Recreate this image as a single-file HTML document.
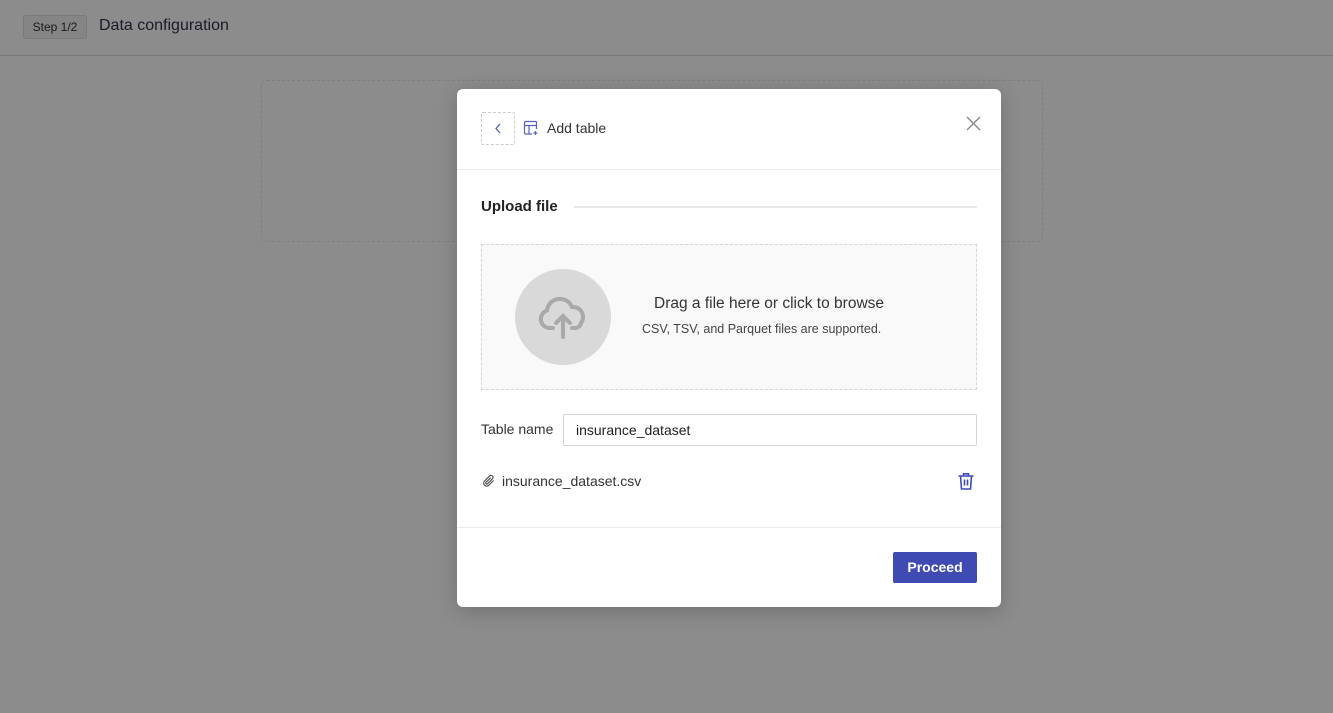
<!DOCTYPE html>
<html><head><style>
body{margin:0;width:1333px;height:713px;background:#8c8c8c;font-family:"Liberation Sans",sans-serif;position:relative;overflow:hidden}
.step{position:absolute;left:23px;top:15px;width:62px;height:22px;border:1px solid #7a7a7a;border-radius:3px;background:#858585;font-size:12px;color:#1a1a1a;text-align:center;line-height:22px}
.title{position:absolute;left:99px;top:17px;font-size:16px;color:#1c1a2a}
.hr{position:absolute;left:0;right:0;top:55px;border-top:1px solid #777}
.bgbox{position:absolute;left:261px;top:80px;width:780px;height:160px;border:1px dashed #7f7f7f;border-radius:6px}
.modal{position:absolute;left:457px;top:89px;width:544px;height:518px;background:#fff;border-radius:6px;box-shadow:0 4px 20px rgba(0,0,0,.2)}
.back{position:absolute;left:24px;top:23px;width:32px;height:31px;border:1px dashed #ccc;border-radius:2px}
.sep{position:absolute;left:0;right:0;border-top:1px solid #ebebeb}
.drop{position:absolute;left:24px;top:155px;width:494px;height:144px;border:1px dashed #d5d5d5;background:#f9f9f9}
.circ{position:absolute;left:33px;top:24px;width:96px;height:96px;border-radius:50%;background:#d9d9d9}
input{position:absolute;left:106px;top:325px;width:414px;height:32px;box-sizing:border-box;border:1px solid #d5d5d5;border-radius:2px;padding:0 12px;font:14px "Liberation Sans",sans-serif;color:#222}
.btn{position:absolute;left:436px;top:463px;width:84px;height:31px;background:#3f4ab3;border-radius:2px;color:#fff;font-weight:bold;font-size:14px;text-align:center;line-height:31px}
</style></head><body>
<div class="step">Step 1/2</div>
<div class="title">Data configuration</div>
<div class="hr"></div>
<div class="bgbox"></div>
<div class="modal">
 <div class="back"><svg width="32" height="31"><path d="M18 11l-4 4.5 4 4.5" stroke="#5560c0" stroke-width="1.3" fill="none"/></svg></div>
 <svg style="position:absolute;left:66px;top:31px" width="16" height="16" viewBox="0 0 16 16"><g stroke="#5560c0" stroke-width="1.2" fill="none"><path d="M9 14H2.5a1 1 0 0 1-1-1V2.5a1 1 0 0 1 1-1h10a1 1 0 0 1 1 1V9"/><path d="M1.5 5.5h12M6 5.5V14"/><path d="M12.5 11v4M10.5 13h4"/></g></svg>
 <div style="position:absolute;left:90px;top:31px;font-size:14px;color:#333">Add table</div>
 <svg style="position:absolute;left:509px;top:27px" width="15" height="15"><path d="M1 1l13 13M14 1L1 14" stroke="#888" stroke-width="1.4"/></svg>
 <div class="sep" style="top:80px"></div>
 <div style="position:absolute;left:24px;top:109px;font-size:15px;font-weight:bold;color:#222">Upload file</div>
 <div style="position:absolute;left:117px;top:117px;width:403px;border-top:2px solid #e8e8e8"></div>
 <div class="drop">
  <div class="circ"><svg width="96" height="96" viewBox="0 0 96 96"><g stroke="#a9a9a9" stroke-width="4" fill="none" stroke-linecap="round"><path d="M38 59h-4a9 9 0 0 1-2-17.5A13 13 0 0 1 57 38a10 10 0 0 1 9 16 6 6 0 0 1-6 5h-3"/><path d="M48 68V47M41 54l7-7 7 7"/></g></svg></div>
  <div style="position:absolute;left:172px;top:50px;font-size:15.5px;color:#333">Drag a file here or click to browse</div>
  <div style="position:absolute;left:160px;top:77px;font-size:12.5px;color:#444">CSV, TSV, and Parquet files are supported.</div>
 </div>
 <div style="position:absolute;left:24px;top:332px;font-size:14px;color:#333">Table name</div>
 <input value="insurance_dataset">
 <svg style="position:absolute;left:25px;top:385px" width="14" height="14" viewBox="0 0 14 14"><path d="M11.5 6.5L6.5 11.5a3 3 0 0 1-4.2-4.2L7.8 1.8a2 2 0 0 1 2.8 2.8L5.3 9.9a1 1 0 0 1-1.4-1.4L8.7 3.7" stroke="#555" stroke-width="1.2" fill="none"/></svg>
 <div style="position:absolute;left:45px;top:384px;font-size:14px;color:#333">insurance_dataset.csv</div>
 <svg style="position:absolute;left:500px;top:383px" width="18" height="19" viewBox="0 0 18 19"><g stroke="#3f4ab3" stroke-width="1.6" fill="none"><path d="M1.5 4h15M6.5 4V1.8h5V4M3.5 4l1 13h9l1-13M7.5 7.5v6M10.5 7.5v6"/></g></svg>
 <div class="sep" style="top:438px"></div>
 <div class="btn">Proceed</div>
</div>
</body></html>
